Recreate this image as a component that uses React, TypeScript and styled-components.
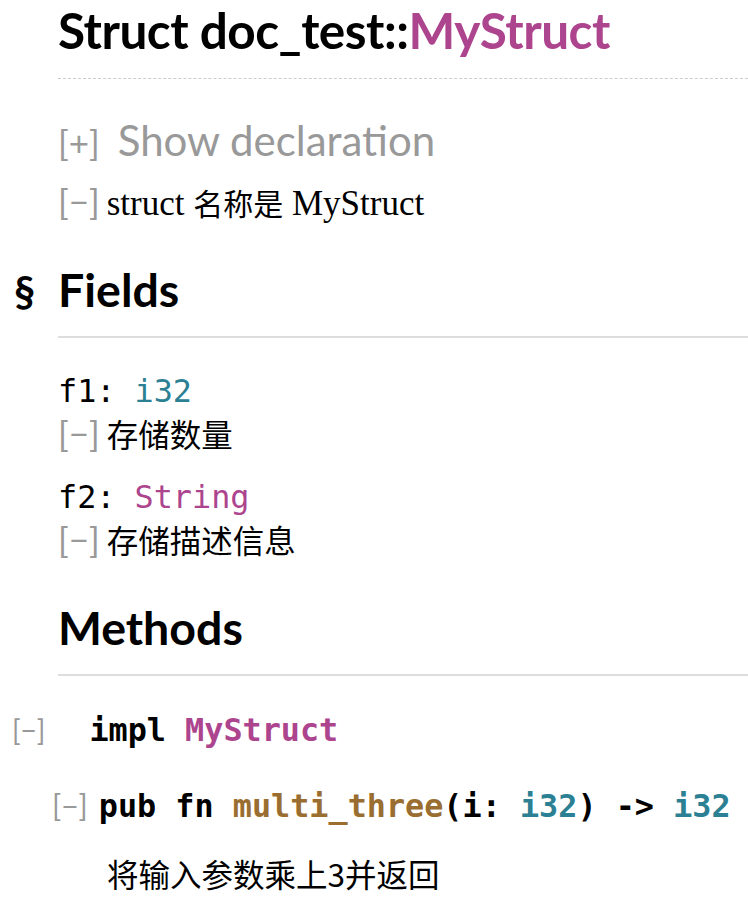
import React from "react";
import styled, { createGlobalStyle } from "styled-components";

const GlobalStyle = createGlobalStyle`
  html, body { margin: 0; padding: 0; background: #ffffff; }
  body { font-family: "Lato", "Noto Sans CJK SC", sans-serif; color: #000; }
`;

const C = {
  struct: "#ad448e",
  prim: "#2c8093",
  fn: "#9a6e31",
  toggle: "#999999",
  rule: "#dddddd",
};

const Main = styled.main`
  display: flex;
  flex-direction: column;
  padding-left: 58px;
  width: 690px;
`;

const Title = styled.h1`
  margin: 0;
  font-family: "Lato", "Noto Sans CJK SC", sans-serif;
  font-weight: 700;
  font-size: 49.5px;
  line-height: 60px;
  padding-bottom: 18px;
  border-bottom: 1px dashed #cccccc;
  white-space: nowrap;
  letter-spacing: -0.5px;
`;

const Colored = styled.span<{ $c: string }>`
  color: ${(p) => p.$c};
`;

const Toggle = styled.span<{ $size?: number }>`
  font-family: "Lato", sans-serif;
  font-weight: 400;
  color: ${C.toggle};
  font-size: ${(p) => p.$size ?? 35}px;
  white-space: nowrap;
`;

const DeclRow = styled.div`
  display: flex;
  align-items: baseline;
  gap: 18px;
  margin-top: 33px;
  height: 56px;
  line-height: 56px;
`;

const DeclLabel = styled.span`
  font-size: 42px;
  color: ${C.toggle};
  font-family: "Lato", sans-serif;
`;

const DocRow = styled.div<{ $mt?: number }>`
  display: flex;
  align-items: baseline;
  gap: 7px;
  line-height: 38px;
  margin-top: ${(p) => p.$mt ?? 0}px;
`;

const SerifText = styled.span`
  font-family: "Liberation Serif", "Noto Sans CJK SC", serif;
  font-size: 35px;
`;

const CjkInline = styled.span`
  font-family: "Noto Sans CJK SC", sans-serif;
  font-size: 30px;
`;

const CjkText = styled.span`
  font-family: "Noto Sans CJK SC", sans-serif;
  font-size: 31.5px;
`;

const SectionHead = styled.h2<{ $mt: number }>`
  display: flex;
  align-items: baseline;
  margin: ${(p) => p.$mt}px 0 0 -58px;
  font-weight: 700;
  font-size: 46.5px;
  line-height: 56px;
  font-family: "Lato", sans-serif;
`;

const Anchor = styled.span`
  width: 58px;
  padding-left: 14px;
  box-sizing: border-box;
  font-size: 42px;
`;

const HeadText = styled.span`
  flex: 1;
  padding-bottom: 19px;
  border-bottom: 2px solid ${C.rule};
`;

const Code = styled.code<{ $bold?: boolean }>`
  font-family: "DejaVu Sans Mono", "Liberation Mono", monospace;
  font-size: 31.8px;
  font-weight: ${(p) => (p.$bold ? 700 : 400)};
  white-space: pre;
`;

const FieldBlock = styled.div<{ $mt: number }>`
  display: flex;
  flex-direction: column;
  margin-top: ${(p) => p.$mt}px;
`;

const FieldSig = styled.div`
  line-height: 36px;
`;

const ImplRow = styled.div`
  display: flex;
  align-items: baseline;
  margin: 30px 0 0 -46px;
  line-height: 48px;
  gap: 44px;
`;

const FnRow = styled.div`
  display: flex;
  align-items: baseline;
  margin: 27px 0 0 -6px;
  line-height: 48px;
  gap: 11px;
`;

const MethodDoc = styled.div`
  padding-left: 49px;
  margin-top: 21px;
  line-height: 44px;
`;

export default function App() {
  return (
    <>
      <GlobalStyle />
      <Main>
        <Title>
          Struct doc_test::<Colored $c={C.struct}>MyStruct</Colored>
        </Title>
        <DeclRow>
          <Toggle>[+]</Toggle>
          <DeclLabel>Show declaration</DeclLabel>
        </DeclRow>
        <DocRow $mt={14}>
          <Toggle>[−]</Toggle>
          <SerifText>
            struct <CjkInline>名称是</CjkInline> MyStruct
          </SerifText>
        </DocRow>
        <SectionHead $mt={38}>
          <Anchor>§</Anchor>
          <HeadText>Fields</HeadText>
        </SectionHead>
        <FieldBlock $mt={35}>
          <FieldSig>
            <Code>
              f1: <Colored $c={C.prim}>i32</Colored>
            </Code>
          </FieldSig>
          <DocRow>
            <Toggle>[−]</Toggle>
            <CjkText>存储数量</CjkText>
          </DocRow>
        </FieldBlock>
        <FieldBlock $mt={27}>
          <FieldSig>
            <Code>
              f2: <Colored $c={C.struct}>String</Colored>
            </Code>
          </FieldSig>
          <DocRow>
            <Toggle>[−]</Toggle>
            <CjkText>存储描述信息</CjkText>
          </DocRow>
        </FieldBlock>
        <SectionHead $mt={41}>
          <Anchor />
          <HeadText>Methods</HeadText>
        </SectionHead>
        <ImplRow>
          <Toggle $size={28}>[−]</Toggle>
          <Code $bold>
            impl <Colored $c={C.struct}>MyStruct</Colored>
          </Code>
        </ImplRow>
        <FnRow>
          <Toggle $size={30}>[−]</Toggle>
          <Code $bold>
            pub fn <Colored $c={C.fn}>multi_three</Colored>(i:{" "}
            <Colored $c={C.prim}>i32</Colored>) -&gt;{" "}
            <Colored $c={C.prim}>i32</Colored>
          </Code>
        </FnRow>
        <MethodDoc>
          <CjkText>将输入参数乘上3并返回</CjkText>
        </MethodDoc>
      </Main>
    </>
  );
}
